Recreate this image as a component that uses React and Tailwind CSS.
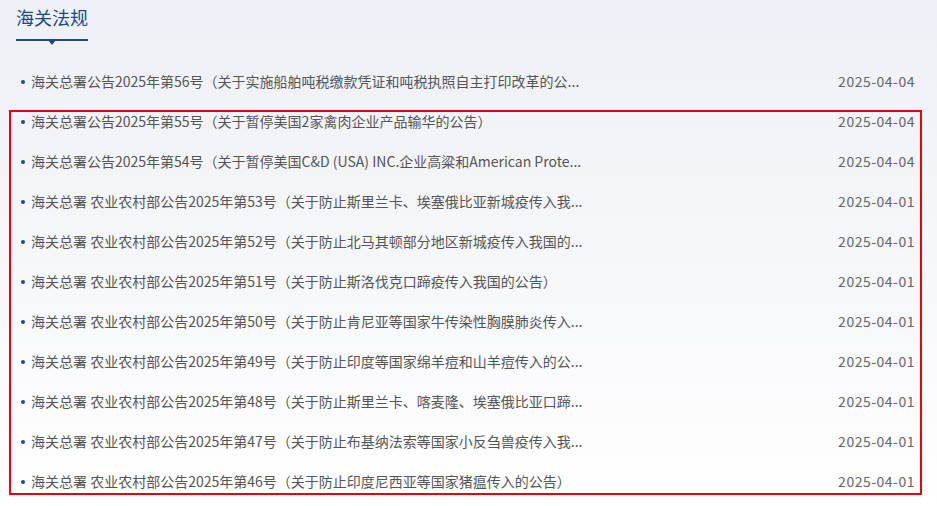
const items = [
  { title: "海关总署公告2025年第56号（关于实施船舶吨税缴款凭证和吨税执照自主打印改革的公...", date: "2025-04-04" },
  { title: "海关总署公告2025年第55号（关于暂停美国2家禽肉企业产品输华的公告）", date: "2025-04-04" },
  { title: "海关总署公告2025年第54号（关于暂停美国C&D (USA) INC.企业高粱和American Prote...", date: "2025-04-04" },
  { title: "海关总署 农业农村部公告2025年第53号（关于防止斯里兰卡、埃塞俄比亚新城疫传入我...", date: "2025-04-01" },
  { title: "海关总署 农业农村部公告2025年第52号（关于防止北马其顿部分地区新城疫传入我国的...", date: "2025-04-01" },
  { title: "海关总署 农业农村部公告2025年第51号（关于防止斯洛伐克口蹄疫传入我国的公告）", date: "2025-04-01" },
  { title: "海关总署 农业农村部公告2025年第50号（关于防止肯尼亚等国家牛传染性胸膜肺炎传入...", date: "2025-04-01" },
  { title: "海关总署 农业农村部公告2025年第49号（关于防止印度等国家绵羊痘和山羊痘传入的公...", date: "2025-04-01" },
  { title: "海关总署 农业农村部公告2025年第48号（关于防止斯里兰卡、喀麦隆、埃塞俄比亚口蹄...", date: "2025-04-01" },
  { title: "海关总署 农业农村部公告2025年第47号（关于防止布基纳法索等国家小反刍兽疫传入我...", date: "2025-04-01" },
  { title: "海关总署 农业农村部公告2025年第46号（关于防止印度尼西亚等国家猪瘟传入的公告）", date: "2025-04-01" },
];

export default function App() {
  return (
    <div
      className="relative w-[937px] h-[506px] overflow-hidden bg-gradient-to-b from-[#edf0f6] via-[#f6f7fa] to-white"
      style={{ fontFamily: '"Microsoft YaHei", "Noto Sans CJK SC", "Noto Sans", sans-serif' }}
    >
      {/* Header */}
      <div className="px-4 pt-[3px]">
        <div className="relative w-[72px]">
          <h2 className="text-[18px] leading-[28px] text-[#1e4a86]">海关法规</h2>
          <div className="mt-[8px] h-[1.5px] bg-[#1e4a86]" />
          <div className="absolute left-[32px] top-[37px] w-0 h-0 border-l-[4px] border-r-[4px] border-t-[5px] border-l-transparent border-r-transparent border-t-[#1e4a86]" />
        </div>
      </div>

      {/* List */}
      <ul className="mt-[21px] pl-[21px] pr-[22px]">
        {items.map((item, i) => (
          <li key={i} className="flex items-center h-[40px] text-[14px] text-[#555]">
            <span className="w-[4px] h-[4px] rounded-full bg-[#1e4a86] mr-[6px] shrink-0" />
            <span className="whitespace-nowrap">{item.title}</span>
            <span className="ml-auto tracking-[0.5px] text-[#666]">{item.date}</span>
          </li>
        ))}
      </ul>

      {/* Highlight box */}
      <div className="absolute left-[9px] top-[110px] w-[913px] h-[385px] border-2 border-[#e60012] pointer-events-none" />
    </div>
  );
}
